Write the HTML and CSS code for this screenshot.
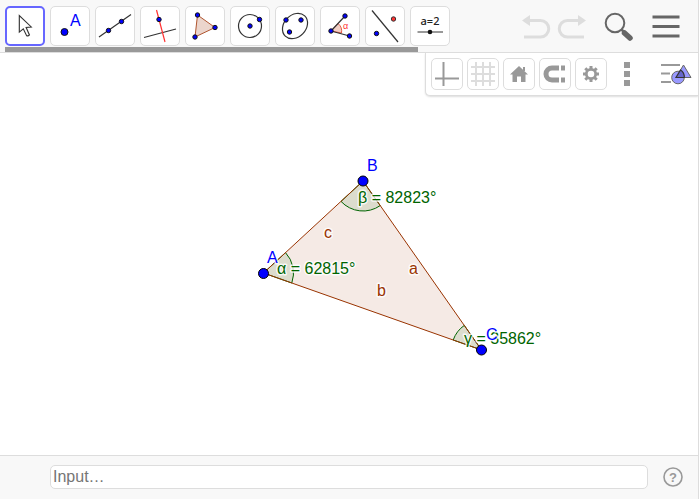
FILE: index.html
```html
<!DOCTYPE html>
<html lang="en">
<head>
<meta charset="utf-8">
<title>Geometry</title>
<link rel="stylesheet" href="styles.css">
</head>
<body>
<div class="app">
  <header class="toolbar">
    <div class="tools">
      <button class="tool selected" aria-label="Move"><svg viewBox="0 0 38 38"><path d="M13 8V25.500L17.200 22l3.500 7.200q1.700.8 3-.8L20.200 20.500l5.400-.5z" fill="#fff" stroke="#333" stroke-width="1.200"/></svg></button>
      <button class="tool" aria-label="Point"><svg viewBox="0 0 38 38"><circle class="dot" cx="13.500" cy="25" r="3.500"/><text class="point-letter" x="19" y="19">A</text></svg></button>
      <button class="tool" aria-label="Line"><svg viewBox="0 0 38 38"><path class="ink" d="M3 30 35 7.500"/><circle class="dot" cx="12.500" cy="23.500" r="2.200"/><circle class="dot" cx="25.500" cy="14.500" r="2.200"/></svg></button>
      <button class="tool" aria-label="Perpendicular line"><svg viewBox="0 0 38 38"><path class="ink" d="M3 30.500 35 22"/><path d="M15.500 3 24 35" stroke="#f33" stroke-width="1.200"/><circle class="dot" cx="18" cy="12.500" r="2.200"/></svg></button>
      <button class="tool" aria-label="Polygon"><svg viewBox="0 0 38 38"><path d="M11.500 8 29 20.500 9 30z" fill="#ebd5cc" stroke="#b0552f"/><circle class="dot" cx="11.500" cy="8" r="2.200"/><circle class="dot" cx="29" cy="20.500" r="2.200"/><circle class="dot" cx="9" cy="30" r="2.200"/></svg></button>
      <button class="tool" aria-label="Circle"><svg viewBox="0 0 38 38"><circle class="ink" cx="19" cy="19" r="11.500"/><circle class="dot" cx="19" cy="19" r="2.200"/><circle class="dot" cx="28.500" cy="12.500" r="2.200"/></svg></button>
      <button class="tool" aria-label="Ellipse"><svg viewBox="0 0 38 38"><ellipse class="ink" cx="19" cy="19" rx="14" ry="11" transform="rotate(-46 19 19)"/><circle class="dot" cx="10" cy="13" r="2.200"/><circle class="dot" cx="25" cy="13" r="2.200"/><circle class="dot" cx="13.500" cy="25" r="2.200"/></svg></button>
      <button class="tool" aria-label="Angle"><svg viewBox="0 0 38 38"><path d="M10 24l7-7.500a10 10 0 0 1 3.500 9.500z" fill="#f2cfc5" stroke="#e65a45"/><path class="ink" d="M24 9 10 24 28.500 29"/><circle class="dot" cx="24" cy="9" r="2.200"/><circle class="dot" cx="10" cy="24" r="2.200"/><circle class="dot" cx="28.500" cy="29" r="2.200"/><text class="angle-letter" x="22" y="22">α</text></svg></button>
      <button class="tool" aria-label="Reflect"><svg viewBox="0 0 38 38"><path class="ink" d="M6 3.500 32 35"/><circle class="dot" cx="10.500" cy="26.500" r="2.200"/><circle cx="27.500" cy="12" r="2.200" fill="#f33" stroke="#333"/></svg></button>
      <button class="tool" aria-label="Slider"><svg viewBox="0 0 38 38"><text class="slider-text" x="19" y="18" text-anchor="middle">a=2</text><path d="M6.500 25H32" stroke="#777" stroke-width="1.500"/><circle cx="19" cy="25" r="2.300" fill="#111"/></svg></button>
      <div class="scroll-thumb"></div>
    </div>
    <div class="actions">
      <button class="action undo" aria-label="Undo" disabled><svg viewBox="0 0 30 30"><path d="M8 8.500H19.500a8 8 0 0 1 0 16.500H3" fill="none" stroke="#ddd" stroke-width="3"/><path d="M1 8.500 9 3V14z" fill="#ddd"/></svg></button>
      <button class="action redo" aria-label="Redo" disabled><svg viewBox="0 0 30 30"><path d="M22 8.500H10.500a8 8 0 0 0 0 16.500H27" fill="none" stroke="#ddd" stroke-width="3"/><path d="M29 8.500 21 3V14z" fill="#ddd"/></svg></button>
      <button class="action" aria-label="Search"><svg viewBox="0 0 30 30"><circle cx="11" cy="11" r="9.300" fill="none" stroke="#666" stroke-width="2"/><path d="m17.500 17.500 4 4" stroke="#666" stroke-width="2.500"/><path d="m20.500 21 5.500 5" stroke="#666" stroke-width="5.500" stroke-linecap="round"/></svg></button>
      <button class="action menu" aria-label="Menu"><svg viewBox="0 0 30 30"><path d="M1.500 5H28.500M1.500 14.500H28.500M1.500 24H28.500" stroke="#666" stroke-width="3"/></svg></button>
    </div>
  </header>

  <main class="view">
    <svg class="drawing" role="img" aria-label="Triangle ABC">
      <g transform="translate(0 -53)">
        <path d="M263.500 273 363 181 481.500 350z" fill="#993300" fill-opacity=".1"/>
        <g class="angle">
          <path d="M263.500 273 285.500 252.600A30 30 0 0 1 291.800 283z"/>
          <path d="M363 181 380.200 205.600A30 30 0 0 1 341 201.400z"/>
          <path d="M481.500 350 453.200 340A30 30 0 0 1 464.300 325.400z"/>
        </g>
        <path d="M263.500 273 363 181 481.500 350z" fill="none" stroke="#993300"/>
        <text class="label point" x="267" y="263">A</text>
        <text class="label point" x="367" y="171">B</text>
        <g class="label measure">
          <text x="277" y="274">α = 62815°</text>
          <text x="358" y="203">β = 82823°</text>
          <text x="464" y="344">γ = 35862°</text>
        </g>
        <g class="label side">
          <text x="409" y="274">a</text>
          <text x="377" y="296">b</text>
          <text x="324" y="238">c</text>
        </g>
        <text class="label point" x="486" y="340">C</text>
        <circle class="vertex" cx="263.500" cy="273.500" r="5"/>
        <circle class="vertex" cx="363" cy="181" r="5"/>
        <circle class="vertex" cx="481.500" cy="350" r="5"/>
      </g>
    </svg>
    <div class="stylebar">
      <button class="style" aria-label="Axes"><svg viewBox="0 0 30 30"><path d="M11.500 3V27M3 19.500H27" stroke="#999" stroke-width="2"/></svg></button>
      <button class="style" aria-label="Grid"><svg viewBox="0 0 30 30"><path d="M8 3V27M15 3V27M22 3V27M3 8H27M3 15H27M3 22H27" stroke="#ddd" stroke-width="2"/></svg></button>
      <button class="style" aria-label="Standard view"><svg viewBox="0 0 30 30"><path d="M15 7 24 15.500H21.500V23H17V17.500H13V23H8.500V15.500H6z" fill="#999"/><path d="M19 8h2v4h-2z" fill="#999"/></svg></button>
      <button class="style" aria-label="Point capturing"><svg viewBox="0 0 30 30"><path d="M19 9H12a6 6 0 0 0 0 12h7" fill="none" stroke="#999" stroke-width="5"/><path d="M21 6.500h4v5h-4zM21 18.500h4v5h-4z" fill="#999"/></svg></button>
      <button class="style" aria-label="Settings"><svg viewBox="0 0 30 30"><circle cx="15" cy="15" r="4.700" fill="none" stroke="#999" stroke-width="2.800"/><path d="M15 7V10M15 20V23M7 15H10M20 15H23M9.300 9.300l2.200 2.200M18.500 18.500l2.200 2.200M20.700 9.300l-2.200 2.200M11.500 18.500l-2.200 2.200" stroke="#999" stroke-width="3"/></svg></button>
      <button class="style plain" aria-label="More"><svg viewBox="0 0 30 30"><path d="M12 3h6v6h-6zM12 12h6v6h-6zM12 21h6v6h-6z" fill="#999"/></svg></button>
      <button class="style plain wide" aria-label="Object properties"><svg viewBox="0 0 32 30"><path d="M1 6H20M1 14.500H10M1 23H11" stroke="#999" stroke-width="2"/><path d="M23.500 6 31 18.500H16z" fill="#99f" stroke="#666"/><circle cx="18" cy="18.500" r="6.300" fill="#99f" stroke="#666"/><path d="M20.500 11 16 18.500h8.300q.2-5-3.800-7.500z" fill="#66c" stroke="#333" stroke-width="1.200"/></svg></button>
    </div>
  </main>

  <footer class="inputbar">
    <input class="command" type="text" placeholder="Input…" aria-label="Input">
    <button class="help" aria-label="Help"><svg viewBox="0 0 20 20"><circle cx="10" cy="10" r="9" fill="none" stroke="#999" stroke-width="1.600"/><text class="help-mark" x="10" y="15" text-anchor="middle">?</text></svg></button>
  </footer>
</div>
</body>
</html>
```
FILE: styles.css
```css
* { box-sizing: border-box; }
html, body { height: 100%; }
body {
  margin: 0;
  padding: 0 1px 1px 0;
  background: #fff;
  font-family: "Liberation Sans", sans-serif;
  font-size: 16px;
}
button { padding: 0; border: 0; background: none; }
svg { display: block; width: 100%; height: 100%; }

.app {
  display: flex;
  flex-direction: column;
  height: 100%;
  border-right: 1px solid #ddd;
}

.toolbar {
  display: flex;
  justify-content: space-between;
  align-items: flex-start;
  height: 53px;
  padding: 6px 17px 0 5px;
  background: #f8f8f8;
  border-bottom: 1px solid #ddd;
}
.tools {
  position: relative;
  display: flex;
  gap: 5px;
  padding-bottom: 6px;
}
.tool {
  width: 40px;
  height: 40px;
  border: 1px solid #ddd;
  border-radius: 5px;
  background: #fff;
}
.tool.selected { border: 2px solid #66f; }
.scroll-thumb {
  position: absolute;
  left: 0;
  right: 32px;
  bottom: 0;
  height: 5px;
  background: #999;
}
.ink { fill: none; stroke: #333; stroke-width: 1.2px; }
.dot { fill: #00f; stroke: #111; }
.point-letter { fill: #00f; font-size: 16px; }
.angle-letter { fill: #f33; font-size: 9px; }
.slider-text { fill: #222; font-family: "Noto Sans", sans-serif; font-size: 11px; font-weight: 500; }

.actions { display: flex; padding-top: 6px; }
.action { width: 30px; height: 30px; }
.undo { margin-right: 6px; }
.redo { margin-right: 17px; }
.menu { margin-left: 17px; }

.view { position: relative; flex: 1; min-height: 0; }
.drawing { position: absolute; inset: 0; }
.angle { fill: #006400; fill-opacity: .1; stroke: #006400; }
.vertex { fill: #00f; stroke: #000; }
.label { paint-order: stroke; stroke: #fff; stroke-opacity: .8; stroke-width: 3px; stroke-linejoin: round; font-size: 16px; }
.point { fill: #00f; }
.measure { fill: #006400; }
.side { fill: #993300; }

.stylebar {
  position: absolute;
  top: 0;
  right: 0;
  display: flex;
  gap: 4px;
  padding: 5px;
  background: #fff;
  border: solid #ddd;
  border-width: 0 0 1px 1px;
  border-bottom-left-radius: 5px;
  box-shadow: 0 1px 2px #ddd;
}
.style {
  width: 32px;
  height: 32px;
  border: 1px solid #ddd;
  border-radius: 5px;
}
.plain { border-color: transparent; }
.wide { width: 34px; margin-left: 12px; }

.inputbar {
  display: flex;
  align-items: center;
  gap: 15px;
  height: 44px;
  padding: 0 15px 2px 50px;
  background: #f8f8f8;
  border-top: 1px solid #ddd;
}
.command {
  flex: 1;
  height: 24px;
  padding: 0 2px;
  border: 1px solid #ddd;
  border-radius: 5px;
  background: #fff;
  font: inherit;
}
.command::placeholder { color: #757575; }
.help { width: 20px; height: 20px; }
.help-mark { fill: #999; font-size: 13px; font-weight: bold; }
```
